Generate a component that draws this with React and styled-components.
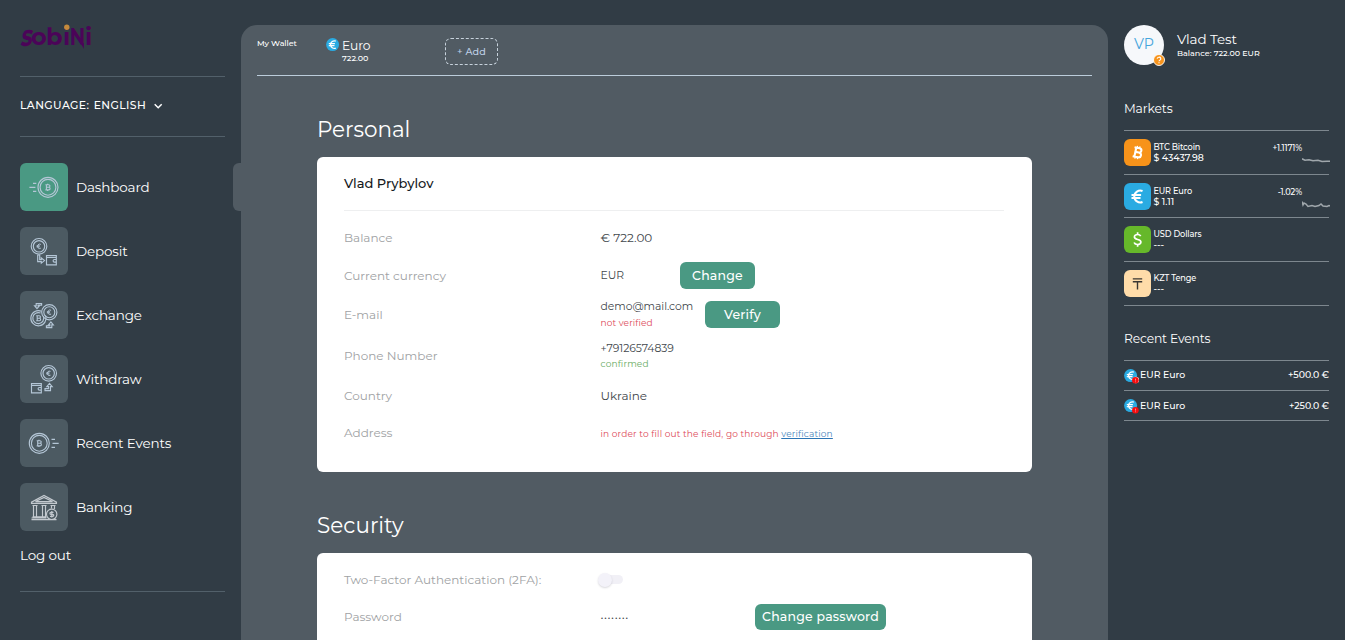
import React from "react";
import styled, { createGlobalStyle } from "styled-components";

const c = {
  bg: "#313c45",
  panel: "#515b63",
  tile: "#4c5a62",
  green: "#4a9983",
  line: "#52606a",
  lineLight: "#7d878e",
  icon: "#b4c6d6",
  blue: "#2aabe2",
};

const Global = createGlobalStyle`
  * { box-sizing: border-box; }
  html, body { margin: 0; height: 100%; overflow: hidden; }
  body { background: ${c.bg}; color: #fff; font-family: Montserrat, Inter, sans-serif; }
`;

const Page = styled.div`
  display: grid;
  grid-template-columns: 241px 867px 237px;
  height: 640px;
  overflow: hidden;
`;

const Text = styled.span`
  display: block;
  white-space: nowrap;
  font-size: ${(p) => p.$size}px;
  line-height: ${(p) => p.$lh || 16}px;
  letter-spacing: ${(p) => p.$ls || 0}px;
  font-weight: ${(p) => p.$weight || 400};
  color: ${(p) => p.$color || "inherit"};
`;

/* Sidebar */
const Sidebar = styled.aside`
  padding: 22px 0 0 18px;
`;
const SidebarBody = styled.div`
  padding-left: 2px;
`;
const LogoBox = styled.div`
  height: 54px;
  svg { display: block; }
`;
const LanguageSelect = styled.div`
  display: flex;
  align-items: center;
  gap: 7px;
  width: 205px;
  height: 61px;
  border-top: 1px solid ${c.line};
  border-bottom: 1px solid ${c.line};
  padding-bottom: 2px;
  word-spacing: 1px;
`;
const Nav = styled.nav`
  display: flex;
  flex-direction: column;
  gap: 16px;
  padding-top: 26px;
`;
const NavItem = styled.a`
  display: flex;
  align-items: center;
  gap: 8px;
  height: 48px;
  &::after {
    content: "";
    display: ${(p) => (p.$active ? "block" : "none")};
    width: 8px;
    height: 48px;
    margin-left: auto;
    border-radius: 6px 0 0 6px;
    background: ${c.panel};
  }
`;
const Tile = styled.div`
  width: 48px;
  height: 48px;
  border-radius: 6px;
  background: ${(p) => (p.$active ? c.green : c.tile)};
  svg { display: block; }
`;
const Logout = styled.div`
  width: 205px;
  height: 61px;
  padding-top: 16px;
  border-bottom: 1px solid ${c.line};
`;

/* Main */
const Main = styled.main`
  margin-top: 25px;
  padding: 0 16px;
  border-radius: 16px 16px 0 0;
  background: ${c.panel};
`;
const WalletBar = styled.header`
  display: flex;
  align-items: flex-start;
  height: 51px;
  padding-top: 13px;
  border-bottom: 1px solid #bccddb;
`;
const WalletLabel = styled.div`
  width: 69px;
`;
const Wallet = styled.div`
  display: flex;
  gap: 1px;
  width: 119px;
  svg { display: block; }
`;
const AddButton = styled.button`
  width: 53px;
  height: 27px;
  padding: 0;
  border: 1px dashed #c7d2dc;
  border-radius: 6px;
  background: transparent;
  color: #bfd0e6;
  font: 500 9.6px Montserrat, Inter, sans-serif;
  letter-spacing: 0.2px;
  line-height: 23px;
`;
const Content = styled.div`
  width: 715px;
  margin-left: 60px;
`;
const Heading = styled.h2`
  margin: 0;
  padding-top: 39px;
  height: 81px;
  font-size: 21.5px;
  line-height: 28px;
  font-weight: 400;
  letter-spacing: ${(p) => p.$ls}px;
`;
const Card = styled.section`
  height: ${(p) => p.$h}px;
  padding: ${(p) => p.$pt}px 28px 0 27px;
  border-radius: 6px;
  background: #fff;
  color: #42474c;
`;
const CardTitle = styled.div`
  height: 43px;
  border-bottom: 1px solid #eeeff0;
  margin-bottom: 8px;
`;
const Row = styled.div`
  display: grid;
  grid-template-columns: 256px ${(p) => p.$value || "1fr"} 1fr;
  align-items: center;
  height: ${(p) => p.$h}px;
`;
const Stack = styled.div`
  padding: ${(p) => p.$top || 0}px 0 0 0.5px;
`;
const Button = styled.button`
  width: ${(p) => p.$w || 75}px;
  height: ${(p) => p.$h || 27}px;
  padding: 0;
  border: 0;
  border-radius: 6px;
  background: ${c.green};
  color: #fff;
  font: 500 12.5px Montserrat, Inter, sans-serif;
  letter-spacing: 0.2px;
`;
const VerifyLink = styled.a`
  color: #4a86bd;
  text-decoration: underline;
  text-decoration-color: #2c75b5;
  text-underline-offset: 1px;
`;
const Toggle = styled.div`
  display: flex;
  align-items: center;
  width: 23px;
  height: 9px;
  border-radius: 5px;
  background: #f1f0f6;
  &::before {
    content: "";
    flex: none;
    width: 14px;
    height: 14px;
    margin-left: -2px;
    border-radius: 50%;
    background: #f3f2f9;
    box-shadow: 0 1px 2px rgba(60, 60, 80, 0.2);
  }
`;

/* Right column */
const Aside = styled.aside`
  padding: 25px 15px 0 16px;
`;
const Profile = styled.div`
  display: flex;
  gap: 13px;
  height: 40px;
`;
const Avatar = styled.div`
  position: relative;
  width: 40px;
  height: 40px;
  padding-top: 11px;
  border-radius: 50%;
  background: #f6f8fb;
  text-align: center;
`;
const AvatarBadge = styled.svg`
  position: absolute;
  left: 29px;
  top: 29px;
`;
const ProfileText = styled.div`
  padding-top: 6px;
`;
const SectionTitle = styled.div`
  padding-top: ${(p) => p.$top}px;
  height: ${(p) => p.$h}px;
`;
const List = styled.div`
  width: 205px;
  border-top: 1px solid ${c.lineLight};
`;
const MarketRow = styled.div`
  display: flex;
  height: ${(p) => p.$h}px;
  padding-top: 8px;
  border-bottom: 1px solid ${c.lineLight};
`;
const CoinTile = styled.svg`
  display: block;
  flex: none;
`;
const MarketText = styled.div`
  flex: none;
  width: 90px;
  padding: 3px 0 0 2.4px;
`;
const Change = styled.div`
  flex: none;
  width: 61px;
  padding-top: 4px;
  text-align: right;
`;
const Spark = styled.svg`
  display: block;
  flex: none;
  margin-top: 17px;
`;
const EventRow = styled.div`
  display: flex;
  align-items: center;
  height: 30px;
  padding-bottom: ${(p) => (p.$first ? 1 : 0)}px;
  border-bottom: 1px solid ${c.lineLight};
  span:last-child { margin-left: auto; }
  svg { display: block; flex: none; margin: 3px 1px 0 0; }
`;

/* Drawings */
const Logo = () => (
  <svg width="78" height="34" viewBox="18 22 78 34" fill="#4b0458">
    <g fontFamily="Montserrat, Inter, sans-serif" fontWeight="700" fontSize="24">
      <text transform="translate(20 46) skewX(-10) scale(.9 1.25)">s</text>
      <text x="31" y="44.5">o</text>
      <text x="46" y="44.5">b</text>
      <text x="63" y="44.5">i</text>
      <text transform="translate(69.8 44.5) scale(.79 1)">N</text>
      <text x="85" y="44.5">i</text>
    </g>
    <path d="M80.5 43h3.4v6z" />
    <circle cx="66.8" cy="27.3" r="2.7" fill="#c48a3c" />
  </svg>
);

const Coin = ({ x, y, r, sign }) => (
  <g transform={`translate(${x} ${y})`}>
    <circle r={r} />
    <circle r={r - 2.1} />
    {sign === "B" ? (
      <path d="M-1.6-2.6v5.2M-2.6-2.6H.6a1.3 1.3 0 0 1 0 2.6H-1.4M-2.6 2.6H.8a1.3 1.3 0 0 0 0-2.6M-.4-3.6v1M-.4 2.6v1" strokeWidth="1.1" />
    ) : (
      <path d="M1.8-1.9A2.2 2.2 0 1 0 1.8 1.9M-2.4-.4H.8M-2.4.6H.6" strokeWidth="1" />
    )}
  </g>
);
const WalletShape = ({ x }) => (
  <g transform={`translate(${x} 28.5)`}>
    <path d="M.5 0h9.8v9.3H.5zM.5 1.8h9.8M10.3 4H8.4a1.3 1.3 0 0 0 0 2.6h1.9" />
  </g>
);
const icons = {
  Dashboard: (
    <>
      <Coin x={28} y={24.3} r={10} sign="B" />
      <path d="M13 20.4h3.3M9.4 24.4h6M13 28.4h3.3" />
    </>
  ),
  Deposit: (
    <>
      <Coin x={19} y={19.3} r={7.8} sign="E" />
      <path d="M17.7 28v6.6h3.6v1.5l3.2-2.5-3.2-2.6v1.6h-1.6V28z" />
      <WalletShape x={26} />
    </>
  ),
  Exchange: (
    <>
      <Coin x={29.3} y={21.2} r={7.6} sign="E" />
      <path d="M21.6 20.3a7.6 7.6 0 1 0 3.9 4.1M20.6 22.1a5.5 5.5 0 1 0 2.8 2.9" />
      <path d="M17.2 24.7v5M16.2 24.7h3a1.2 1.2 0 0 1 0 2.5h-2M16.2 29.7h3.2a1.2 1.2 0 0 0 0-2.5" strokeWidth="1.1" />
      <path d="M21.6 12.5h-5.4v2.4h-1.6l2.4 2.8 2.4-2.8H18v-.8h3.6zM26.4 36.6h5.4v-2.8h1.5l-2.4-2.8-2.4 2.8h1.4v1h-3.5z" />
    </>
  ),
  Withdraw: (
    <>
      <Coin x={28.7} y={18.3} r={7.8} sign="E" />
      <WalletShape x={11} />
      <path d="M25 35.6h5.5v-4h1.7l-2.7-3.2-2.7 3.2h1.8v2H25z" />
    </>
  ),
  "Recent Events": (
    <>
      <Coin x={19.3} y={24.3} r={10} sign="B" />
      <path d="M31.5 20.4H35M32.5 24.4h6.2M31.5 28.4H35" />
    </>
  ),
  Banking: (
    <>
      <path d="M11.5 20.4v-1.2L24 12.4l12.5 6.8v1.2zM15.5 18.6 24 14.4l8.5 4.2z" />
      <path d="M12.5 22.5h5M21.5 22.5h5M30.5 22.5h5M13.5 22.5v11M16.5 22.5v11M22.5 22.5v11M25.5 22.5v11M31.5 22.5v3M34.5 22.5v3.5M12.5 33.8h14M11.5 36.6h25M11.5 35h15" />
      <circle cx="31.7" cy="31.3" r="5.2" />
      <path d="M33.5 29.3h-2.6a1 1 0 0 0 0 2h1.8a1 1 0 0 1 0 2.1H30M31.8 28v6.6" />
    </>
  ),
};
const NavIcon = ({ name }) => (
  <svg width="48" height="48" fill="none" stroke={name === "Banking" ? "#c3c9cf" : c.icon} strokeWidth="1.15">
    {icons[name]}
  </svg>
);

const EuroSign = () => (
  <path d="M4.2-4.6A5 5 0 0 0-2.7 0 5 5 0 0 0 4.2 4.6M-5-1.3H3M-5 1.3H2.5" fill="none" stroke="#fff" strokeWidth="1.7" />
);
const EuroCoin = ({ alert }) => (
  <svg width="15" height="16" viewBox="0 0 15 16">
    <circle cx="6.6" cy="6.6" r="6.5" fill={c.blue} />
    <g transform="translate(6.6 6.6) scale(.76)"><EuroSign /></g>
    {alert && (
      <>
        {alert === 2 && <circle cx="12" cy="11" r="3.2" fill="#fff" />}
        <circle cx="11.4" cy="11.2" r="3.3" fill="#f50d10" />
        <path d="M11.5 9.6v2M11.5 12.4v.8" stroke="#ff9d9d" strokeWidth=".8" />
      </>
    )}
  </svg>
);

const signs = {
  BTC: (
    <g fill="none" stroke="#fff" strokeWidth="2.1" transform="rotate(12)">
      <path d="M-2.2-4.6V4.6M-4-4.6H1.2a2.1 2.1 0 0 1 0 4.4H-2M-4 4.6H1.6a2.3 2.3 0 0 0 0-4.8" />
      <path d="M-1.3-6.6v2M1.2-6.6v2M-1.3 4.6v2M1.2 4.6v2" strokeWidth="1.3" />
    </g>
  ),
  EUR: <g transform="scale(1.2)"><EuroSign /></g>,
  USD: (
    <path d="M3.2-3.3C2.6-4.5 1.5-5 .2-5-1.7-5-3.1-4-3.1-2.5-3.1.7 3.4-.8 3.4 2.5 3.4 4 2 5 .1 5-1.5 5-2.9 4.3-3.4 3M.1-7.2v2.2M.1 5v2.2" fill="none" stroke="#fff" strokeWidth="1.7" />
  ),
  KZT: <path d="M-4.7-4.6H4.7M-4.7-1.8H4.7M0-1.8V6" fill="none" stroke="#3a3632" strokeWidth="1.4" />,
};

const markets = [
  { code: "BTC", name: "BTC Bitcoin", price: "$ 43437.98", bg: "#f7931a", h: 44, change: "+1.1171%", line: "M0 2.8 3 4.2l4-.5 4 1 5-.4 4 1.2 5-.3 4 0" },
  { code: "EUR", name: "EUR Euro", price: "$ 1.11", bg: c.blue, h: 43, change: "-1.02%", line: "M0 1.5l1 3.5 1-2 2 1 2 2.5 4-1 3 1 4-1 2-1.5 2 2 4 .5 2-1 2 .5" },
  { code: "USD", name: "USD Dollars", price: "---", bg: "#66b82a", h: 44 },
  { code: "KZT", name: "KZT Tenge", price: "---", bg: "#ffdca9", h: 44 },
];
const navItems = ["Dashboard", "Deposit", "Exchange", "Withdraw", "Recent Events", "Banking"];

const NavText = ({ children }) => (
  <Text $size={13.5} $ls={-0.14} $weight={450}>{children}</Text>
);
const Label = ({ children }) => (
  <Text $size={12} $color="#a0a2a4">{children}</Text>
);

export default function App() {
  return (
    <>
      <Global />
      <Page>
        <Sidebar>
          <LogoBox><Logo /></LogoBox>
          <SidebarBody>
            <LanguageSelect>
              <Text $size={10.8} $ls={0.42} $weight={500}>LANGUAGE: ENGLISH</Text>
              <svg width="10" height="8" fill="none" stroke="#fff" strokeWidth="1.5"><path d="m1.7 2.2 3.5 3.5 3.5-3.5" /></svg>
            </LanguageSelect>
            <Nav>
              {navItems.map((name, i) => (
                <NavItem key={name} $active={i === 0}>
                  <Tile $active={i === 0}><NavIcon name={name} /></Tile>
                  <NavText>{name}</NavText>
                </NavItem>
              ))}
            </Nav>
            <Logout><NavText>Log out</NavText></Logout>
          </SidebarBody>
        </Sidebar>

        <Main>
          <WalletBar>
            <WalletLabel><Text $size={8} $lh={10} $ls={-0.05} $weight={500}>My Wallet</Text></WalletLabel>
            <Wallet>
              <EuroCoin />
              <div>
                <Text $size={12.3} $lh={15} $ls={-0.12} $weight={450}>Euro</Text>
                <Text $size={8} $lh={10} $weight={500}>722.00</Text>
              </div>
            </Wallet>
            <AddButton>+ Add</AddButton>
          </WalletBar>
          <Content>
            <Heading $ls={-0.05}>Personal</Heading>
            <Card $h={315} $pt={11}>
              <CardTitle><Text $size={13} $lh={31} $color="#15191c" $weight={500}>Vlad Prybylov</Text></CardTitle>
              <Row $h={37}>
                <Label>Balance</Label>
                <Stack><Text $size={12}>€ 722.00</Text></Stack>
              </Row>
              <Row $h={39} $value="80px">
                <Label>Current currency</Label>
                <Stack><Text $size={10.8}>EUR</Text></Stack>
                <Button>Change</Button>
              </Row>
              <Row $h={39} $value="105px">
                <Label>E-mail</Label>
                <Stack>
                  <Text $size={10.8} $ls={-0.04}>demo@mail.com</Text>
                  <Text $size={9} $ls={0.12} $color="#dd4a59">not verified</Text>
                </Stack>
                <Button>Verify</Button>
              </Row>
              <Row $h={43}>
                <Label>Phone Number</Label>
                <Stack $top={1}>
                  <Text $size={10.8} $ls={-0.06}>+79126574839</Text>
                  <Text $size={9} $lh={14} $ls={0.15} $color="#68ab62">confirmed</Text>
                </Stack>
              </Row>
              <Row $h={37}>
                <Label>Country</Label>
                <Stack><Text $size={12}>Ukraine</Text></Stack>
              </Row>
              <Row $h={37}>
                <Label>Address</Label>
                <Stack $top={2}>
                  <Text $size={9} $ls={0.15} $color="#dd4a59">
                    in order to fill out the field, go through <VerifyLink>verification</VerifyLink>
                  </Text>
                </Stack>
              </Row>
            </Card>
            <Heading $ls={0.03}>Security</Heading>
            <Card $h={240} $pt={8}>
              <Row $h={37}>
                <Label>Two-Factor Authentication (2FA):</Label>
                <Toggle />
              </Row>
              <Row $h={37} $value="155px">
                <Label>Password</Label>
                <Stack><Text $size={11} $ls={0.6} $weight={500}>········</Text></Stack>
                <Button $w={131} $h={26}>Change password</Button>
              </Row>
            </Card>
          </Content>
        </Main>

        <Aside>
          <Profile>
            <Avatar>
              <Text $size={14.2} $color="#45a5dc">VP</Text>
              <AvatarBadge width="12" height="12">
                <circle cx="6" cy="6" r="5.5" fill="#f7941d" stroke="#fff" strokeWidth=".9" />
                <path d="M4.2 4.8a1.8 1.6 0 1 1 2.6 1.4Q6 6.6 6 7.3M6 8.2v1.1" fill="none" stroke="#fff" strokeWidth="1.1" />
              </AvatarBadge>
            </Avatar>
            <ProfileText>
              <Text $size={13.5} $lh={17} $ls={-0.1} $weight={450}>Vlad Test</Text>
              <Text $size={8} $lh={10} $weight={500}>Balance: 722.00 EUR</Text>
            </ProfileText>
          </Profile>
          <SectionTitle $top={36} $h={65}><Text $size={12.3} $ls={-0.12} $weight={450}>Markets</Text></SectionTitle>
          <List>
            {markets.map((m) => (
              <MarketRow key={m.code} $h={m.h}>
                <CoinTile width="27" height="27">
                  <rect width="27" height="27" rx="6" fill={m.bg} />
                  <g transform="translate(13.5 13.5)">{signs[m.code]}</g>
                </CoinTile>
                <MarketText>
                  <Text $size={8.2} $lh={10} $ls={-0.12} $weight={500}>{m.name}</Text>
                  <Text $size={9.4} $lh={11} $weight={500}>{m.price}</Text>
                </MarketText>
                {m.change && (
                  <>
                    <Change><Text $size={8.2} $lh={10} $ls={-0.1} $weight={500}>{m.change}</Text></Change>
                    <Spark width="28" height="10" fill="none" stroke="#a0a7ac" strokeWidth="1.5"><path d={m.line} /></Spark>
                  </>
                )}
              </MarketRow>
            ))}
          </List>
          <SectionTitle $top={25} $h={54}><Text $size={12.3} $ls={-0.16} $weight={450}>Recent Events</Text></SectionTitle>
          <List>
            {["+500.0 €", "+250.0 €"].map((amount, i) => (
              <EventRow key={amount} $first={i === 0}>
                <EuroCoin alert={2 - i} />
                <Text $size={9.4} $weight={500}>EUR Euro</Text>
                <Text $size={9.4} $ls={-0.06} $weight={500}>{amount}</Text>
              </EventRow>
            ))}
          </List>
        </Aside>
      </Page>
    </>
  );
}
